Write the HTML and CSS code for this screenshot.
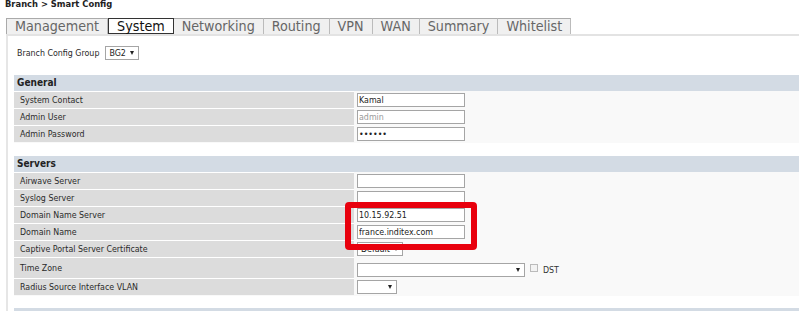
FILE: index.html
```html
<!DOCTYPE html>
<html lang="en">
<head>
    <meta charset="UTF-8">
    <meta name="viewport" content="width=device-width, initial-scale=1.0">
    <title>Branch Smart Config</title>
    <link rel="stylesheet" href="styles.css">
</head>
<body>
    <div class="title">Branch &gt; Smart Config</div>

    <div class="tabs">
        <span class="tab">Management</span>
        <span class="tab active">System</span>
        <span class="tab">Networking</span>
        <span class="tab">Routing</span>
        <span class="tab">VPN</span>
        <span class="tab">WAN</span>
        <span class="tab">Summary</span>
        <span class="tab">Whitelist</span>
    </div>

    <div class="content">
        <div class="group-row">
            <span>Branch Config Group</span>
            <span class="select sel-bg">BG2<i class="arrow"></i></span>
        </div>

        <div class="section">
            <div class="section-head">General</div>
            <div class="row">
                <div class="label">System Contact</div>
                <div class="value"><input class="field" type="text" value="Kamal"></div>
            </div>
            <div class="row">
                <div class="label">Admin User</div>
                <div class="value"><input class="field muted" type="text" value="admin" readonly></div>
            </div>
            <div class="row">
                <div class="label">Admin Password</div>
                <div class="value"><input class="field" type="password" value="secret"></div>
            </div>
        </div>

        <div class="section">
            <div class="section-head">Servers</div>
            <div class="row">
                <div class="label">Airwave Server</div>
                <div class="value"><input class="field" type="text" value=""></div>
            </div>
            <div class="row">
                <div class="label">Syslog Server</div>
                <div class="value"><input class="field" type="text" value=""></div>
            </div>
            <div class="row">
                <div class="label">Domain Name Server</div>
                <div class="value"><input class="field" type="text" value="10.15.92.51"></div>
            </div>
            <div class="row">
                <div class="label">Domain Name</div>
                <div class="value"><input class="field" type="text" value="france.inditex.com"></div>
            </div>
            <div class="row">
                <div class="label">Captive Portal Server Certificate</div>
                <div class="value"><span class="select sel-default">Default<i class="arrow"></i></span></div>
            </div>
            <div class="row tall">
                <div class="label">Time Zone</div>
                <div class="value">
                    <span class="select sel-tz"><i class="arrow"></i></span>
                    <span class="check"></span>
                    <span class="dst">DST</span>
                </div>
            </div>
            <div class="row">
                <div class="label">Radius Source Interface VLAN</div>
                <div class="value"><span class="select sel-vlan"><i class="arrow"></i></span></div>
            </div>

            <!-- red annotation around the DNS fields -->
            <div class="highlight"></div>
        </div>

        <div class="section">
            <div class="section-head"></div>
        </div>
    </div>
</body>
</html>
```

FILE: styles.css
```css
html, body {
    overflow: hidden;
}
body {
    margin: 0;
    height: 311px;
    font-family: "DejaVu Sans Condensed", "DejaVu Sans", sans-serif;
    font-stretch: condensed;
    font-size: 8.8px;
    color: #2a2a2a;
    background-color: #fff;
}
.title {
    font-weight: bold;
    font-size: 9.3px;
    line-height: 10px;
    color: #222;
    margin: -1px 0 9px 5px;
}
.tabs {
    display: flex;
    margin-left: 6px;
    border-bottom: 2px solid #e3e3e3;
}
.tab {
    font-size: 14.2px;
    line-height: 15px;
    padding: 0 8px;
    color: #666;
    background-color: #f0f0f0;
    border-top: 1px solid #aaa;
    border-right: 1px solid #bbb;
}
.tab:first-child {
    border-left: 1px solid #aaa;
}
.tab.active {
    background-color: #fff;
    color: #111;
    border: 1px solid #333;
    line-height: 14px;
}
.content {
    margin-left: 6px;
    border-left: 2px solid #e6e6e6;
    padding: 10px 0 0 6px;
}
.group-row {
    display: flex;
    align-items: center;
    gap: 6px;
    height: 14px;
    padding-left: 3px;
}
.section {
    position: relative;
    margin-top: 13px;
    padding-bottom: 1px;
    background-color: #f9f9f9;
}
.group-row + .section {
    margin-top: 15px;
}
.section:last-child {
    margin-top: 12px;
}
.section-head {
    height: 16px;
    line-height: 16px;
    padding-left: 3px;
    font-size: 10px;
    font-weight: bold;
    color: #222;
    background-color: #d3dbe4;
}
.row {
    display: grid;
    grid-template-columns: 340px 1fr;
    height: 17px;
}
.row.tall {
    height: 21px;
}
.label {
    background-color: #dcdcdc;
    border-top: 1px solid #fff;
    padding-left: 6px;
    line-height: 16px;
}
.row.tall .label {
    line-height: 20px;
}
.value {
    display: flex;
    align-items: center;
    gap: 5px;
    padding: 1px 0 0 3px;
}
.field {
    box-sizing: border-box;
    width: 108px;
    height: 14px;
    margin: 0;
    padding: 0 1px;
    border: 1px solid #a5a5a5;
    border-radius: 0;
    background-color: #fff;
    font-family: "DejaVu Sans Condensed", "DejaVu Sans", sans-serif;
    font-stretch: condensed;
    font-size: 8.8px;
    color: #222;
    outline: none;
}
.field.muted {
    color: #999;
}
.select {
    box-sizing: border-box;
    display: flex;
    align-items: center;
    justify-content: space-between;
    height: 14px;
    padding: 0 4px 0 3px;
    border: 1px solid #a5a5a5;
    background-color: #fff;
    color: #222;
}
.sel-bg {
    width: 34px;
}
.sel-default {
    width: 46px;
}
.sel-tz {
    width: 168px;
    justify-content: flex-end;
    margin-top: 4px;
}
.sel-vlan {
    width: 40px;
    justify-content: flex-end;
}
.arrow {
    width: 0;
    height: 0;
    border-left: 2.5px solid transparent;
    border-right: 2.5px solid transparent;
    border-top: 4px solid #222;
}
.check {
    box-sizing: border-box;
    width: 8px;
    height: 8px;
    margin-bottom: 1px;
    border: 1px solid #bbb;
    background-color: #f3f3f3;
}
.dst {
    color: #333;
    margin-top: 4px;
}
.highlight {
    position: absolute;
    left: 331px;
    top: 46px;
    width: 132px;
    height: 48px;
    box-sizing: border-box;
    border: 6px solid #e8000d;
    border-radius: 4px;
}
```
